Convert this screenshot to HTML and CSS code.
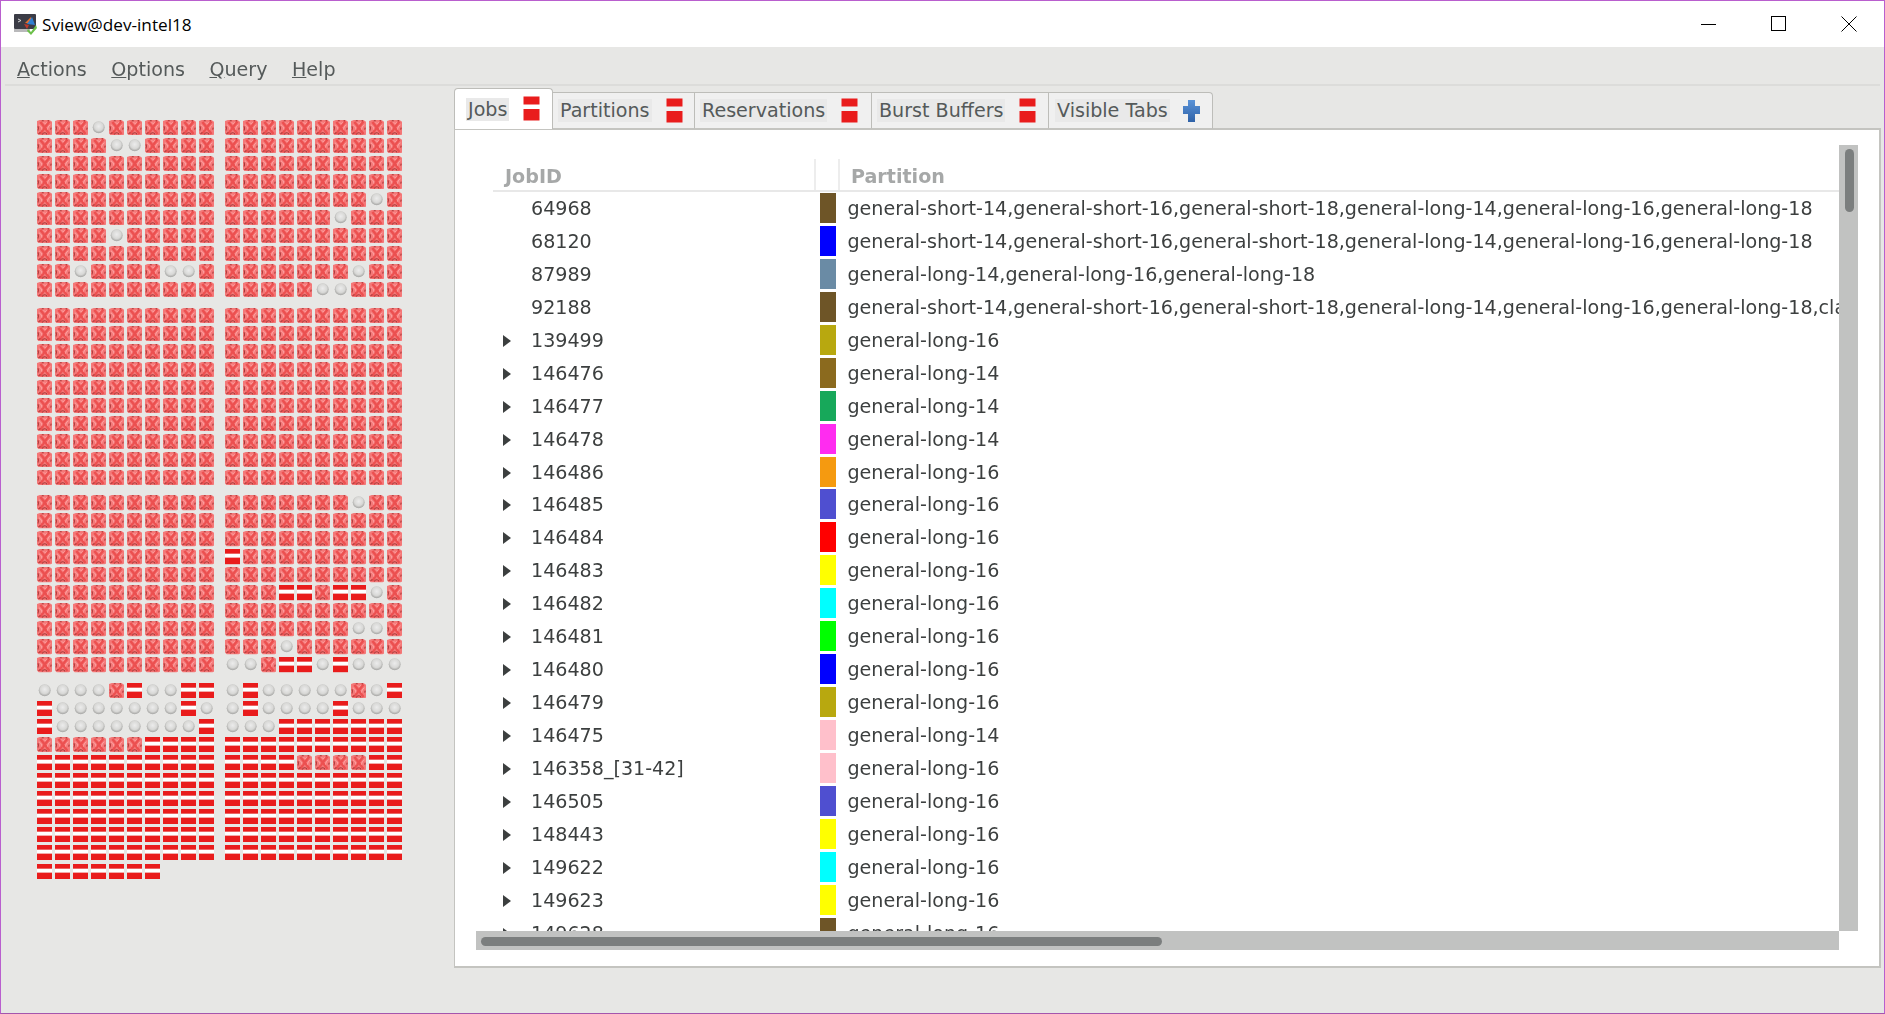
FILE: index.html
```html
<!DOCTYPE html>
<html lang="en">
<head>
<meta charset="utf-8">
<title>Sview@dev-intel18</title>
<link rel="stylesheet" href="styles.css">
</head>
<body>
<svg class="sprites" aria-hidden="true">
  <defs>
    <radialGradient id="ball" cx="50%" cy="42%" r="55%">
      <stop offset="0" stop-color="#ececec"/>
      <stop offset=".65" stop-color="#d8d8d6"/>
      <stop offset="1" stop-color="#a9a9a7"/>
    </radialGradient>
    <linearGradient id="crossfill" x1="0" y1="0" x2="0" y2="1">
      <stop offset="0" stop-color="#5a93d8"/>
      <stop offset="1" stop-color="#2f62a8"/>
    </linearGradient>
    <symbol id="err" viewBox="0 0 16 16" preserveAspectRatio="none">
      <path d="M0 1L3 0L13 0L16 2L16 15L14 16L2 16L0 14z" fill="#f47878"/>
      <path d="M3.500 2C6 5 9 9 13 14.500M13 1.500C10 5 7 9 3.500 14.500" fill="none" stroke="#ec5050" stroke-width="2.400"/>
      <path d="M2 5C4 6 5 8 5 10M14 5C12 6 11 8 11 10M7 2.500C8 4 9 4 10 2.500" fill="none" stroke="#ffa8a8" stroke-width="1"/>
      <path d="M5 .7L7 .7M11 .7L12.500 .7M1 6.500C1.800 8 1.800 9.500 1 11M5.500 15C6.500 12.800 9.500 12.800 10.500 15M1.500 14.500L3.500 13M14.800 8L14.200 10" fill="none" stroke="#a83636" stroke-width="1.100"/>
    </symbol>
    <symbol id="idle" viewBox="0 0 16 16" preserveAspectRatio="none">
      <circle cx="8" cy="7.600" r="6.200" fill="url(#ball)"/>
    </symbol>
    <symbol id="drain" viewBox="0 0 16 16" preserveAspectRatio="none">
      <rect width="16" height="5" fill="#e91c1c"/>
      <rect y="5" width="16" height="4" fill="#fff"/>
      <rect y="9" width="16" height="7" fill="#e91c1c"/>
    </symbol>
  </defs>
</svg>
<div class="window">
  <header class="titlebar">
    <svg class="appicon" viewBox="0 0 23 22">
      <rect x="0" y="1" width="22" height="15" rx="1" fill="#3b3c46"/>
      <rect x="0" y="16" width="16" height="3" fill="#b9b9bb"/>
      <path d="M4 6l3 1.500-3 1.500" fill="none" stroke="#d8d8d8"/>
      <path d="M11 10l6-6 1 7z" fill="#e8702a"/>
      <path d="M13 11l5-7 3 8z" fill="#2f7fd0"/>
      <path d="M10 11l5 1-2 4z" fill="#c0392b"/>
      <path d="M14 16l3 3 5-7 1 3-6 7-4-4z" fill="#6cc04a"/>
    </svg>
    <span class="title">Sview@dev-intel18</span>
    <div class="winctl">
      <svg class="wc" viewBox="0 0 16 16"><path d="M0 8.500h15" stroke="#000" fill="none"/></svg>
      <svg class="wc" viewBox="0 0 16 16"><rect x=".5" y=".5" width="14" height="14" stroke="#000" fill="none"/></svg>
      <svg class="wc" viewBox="0 0 16 16"><path d="M.5.5l15 15M15.500.5l-15 15" stroke="#000" fill="none"/></svg>
    </div>
  </header>
  <div class="app">
    <nav class="menubar">
      <span class="menu"><u>A</u>ctions</span>
      <span class="menu"><u>O</u>ptions</span>
      <span class="menu"><u>Q</u>uery</span>
      <span class="menu"><u>H</u>elp</span>
    </nav>
    <main class="main">
      <section class="nodes" id="nodes"></section>
      <section class="notebook">
        <div class="tabstrip">
          <div class="tab tab-active tab-jobs"><span class="tablabel">Jobs</span><svg class="tabicon" viewBox="0 0 17 25"><rect x=".5" y=".5" width="16" height="8" fill="#e91c1c"/><rect x=".5" y="13" width="16" height="11.500" fill="#e91c1c"/></svg></div>
          <div class="tab tab-part"><span class="tablabel">Partitions</span><svg class="tabicon" viewBox="0 0 17 25"><rect x=".5" y=".5" width="16" height="8" fill="#e91c1c"/><rect x=".5" y="13" width="16" height="11.500" fill="#e91c1c"/></svg></div>
          <div class="tab tab-res"><span class="tablabel">Reservations</span><svg class="tabicon" viewBox="0 0 17 25"><rect x=".5" y=".5" width="16" height="8" fill="#e91c1c"/><rect x=".5" y="13" width="16" height="11.500" fill="#e91c1c"/></svg></div>
          <div class="tab tab-bb"><span class="tablabel">Burst Buffers</span><svg class="tabicon" viewBox="0 0 17 25"><rect x=".5" y=".5" width="16" height="8" fill="#e91c1c"/><rect x=".5" y="13" width="16" height="11.500" fill="#e91c1c"/></svg></div>
          <div class="tab tab-vis"><span class="tablabel">Visible Tabs</span><svg class="tabicon" viewBox="0 0 17 22"><path d="M5 0h7v6h5v8h-5v8h-7v-8h-5v-8h5z" fill="url(#crossfill)"/></svg></div>
        </div>
        <div class="page">
          <div class="view">
            <div class="thead">
              <div class="th th-job">JobID</div>
              <div class="th th-color"></div>
              <div class="th th-part">Partition</div>
            </div>
            <div class="tr"><span class="arrow"></span><span class="id">64968</span><span class="sw c-brown"></span><span class="pt">general-short-14,general-short-16,general-short-18,general-long-14,general-long-16,general-long-18</span></div>
            <div class="tr"><span class="arrow"></span><span class="id">68120</span><span class="sw c-blue"></span><span class="pt">general-short-14,general-short-16,general-short-18,general-long-14,general-long-16,general-long-18</span></div>
            <div class="tr"><span class="arrow"></span><span class="id">87989</span><span class="sw c-steel"></span><span class="pt">general-long-14,general-long-16,general-long-18</span></div>
            <div class="tr"><span class="arrow"></span><span class="id">92188</span><span class="sw c-brown"></span><span class="pt">general-short-14,general-short-16,general-short-18,general-long-14,general-long-16,general-long-18,classres-16</span></div>
            <div class="tr"><span class="arrow closed"></span><span class="id">139499</span><span class="sw c-olive"></span><span class="pt">general-long-16</span></div>
            <div class="tr"><span class="arrow closed"></span><span class="id">146476</span><span class="sw c-tan"></span><span class="pt">general-long-14</span></div>
            <div class="tr"><span class="arrow closed"></span><span class="id">146477</span><span class="sw c-green"></span><span class="pt">general-long-14</span></div>
            <div class="tr"><span class="arrow closed"></span><span class="id">146478</span><span class="sw c-magenta"></span><span class="pt">general-long-14</span></div>
            <div class="tr"><span class="arrow closed"></span><span class="id">146486</span><span class="sw c-orange"></span><span class="pt">general-long-16</span></div>
            <div class="tr"><span class="arrow closed"></span><span class="id">146485</span><span class="sw c-indigo"></span><span class="pt">general-long-16</span></div>
            <div class="tr"><span class="arrow closed"></span><span class="id">146484</span><span class="sw c-red"></span><span class="pt">general-long-16</span></div>
            <div class="tr"><span class="arrow closed"></span><span class="id">146483</span><span class="sw c-yellow"></span><span class="pt">general-long-16</span></div>
            <div class="tr"><span class="arrow closed"></span><span class="id">146482</span><span class="sw c-cyan"></span><span class="pt">general-long-16</span></div>
            <div class="tr"><span class="arrow closed"></span><span class="id">146481</span><span class="sw c-lime"></span><span class="pt">general-long-16</span></div>
            <div class="tr"><span class="arrow closed"></span><span class="id">146480</span><span class="sw c-blue"></span><span class="pt">general-long-16</span></div>
            <div class="tr"><span class="arrow closed"></span><span class="id">146479</span><span class="sw c-olive"></span><span class="pt">general-long-16</span></div>
            <div class="tr"><span class="arrow closed"></span><span class="id">146475</span><span class="sw c-pink"></span><span class="pt">general-long-14</span></div>
            <div class="tr"><span class="arrow closed"></span><span class="id">146358_[31-42]</span><span class="sw c-pink"></span><span class="pt">general-long-16</span></div>
            <div class="tr"><span class="arrow closed"></span><span class="id">146505</span><span class="sw c-indigo"></span><span class="pt">general-long-16</span></div>
            <div class="tr"><span class="arrow closed"></span><span class="id">148443</span><span class="sw c-yellow"></span><span class="pt">general-long-16</span></div>
            <div class="tr"><span class="arrow closed"></span><span class="id">149622</span><span class="sw c-cyan"></span><span class="pt">general-long-16</span></div>
            <div class="tr"><span class="arrow closed"></span><span class="id">149623</span><span class="sw c-yellow"></span><span class="pt">general-long-16</span></div>
            <div class="tr"><span class="arrow closed"></span><span class="id">149628</span><span class="sw c-brown"></span><span class="pt">general-long-16</span></div>
          </div>
          <div class="vbar"><div class="vthumb"></div></div>
          <div class="hbar"><div class="hthumb"></div></div>
        </div>
      </section>
    </main>
  </div>
</div>
<script src="nodes.js"></script>
</body>
</html>
```
FILE: styles.css
```css
* { box-sizing: border-box; }
html, body { margin: 0; height: 100%; overflow: hidden; }
.sprites { width: 0; height: 0; display: block; position: absolute; }

.window {
  width: 1885px;
  height: 1014px;
  display: flex;
  flex-direction: column;
  border: 1px solid #b95fce;
  border-bottom-color: #a455ad;
  background: #e7e7e5;
}

.titlebar {
  height: 46px;
  flex: none;
  background: #fff;
  display: flex;
  align-items: center;
  padding-left: 13px;
  font-family: "Open Sans", "Noto Sans", sans-serif;
  font-size: 17.2px;
  color: #000;
}
.appicon { width: 23px; height: 22px; margin-right: 5px; }
.winctl { margin-left: auto; display: flex; gap: 55px; padding-right: 27px; align-items: center; }
.wc { width: 16px; height: 16px; display: block; }
.wc:nth-child(1) { margin-right: -1px; }
.wc:nth-child(2) { margin-right: -1px; }

.app {
  flex: 1;
  display: flex;
  flex-direction: column;
  min-height: 0;
  font-family: "DejaVu Sans", sans-serif;
  font-size: 19.1px;
  filter: blur(.45px);
}

.menubar {
  height: 39px;
  flex: none;
  margin-left: 4px;
  margin-right: 4px;
  border-bottom: 2px solid #dcdcda;
  display: flex;
  align-items: flex-end;
  gap: 24.500px;
  padding: 0 0 0 12px;
  color: #555a5a;
  line-height: 29px;
}

.main { flex: 1; min-height: 0; display: flex; padding-bottom: 45px; }

.nodes { width: 453px; flex: none; padding: 34px 0 0 36px; }
.block { margin-bottom: 7.700px; }
.nrow { display: flex; gap: 8px; height: 18px; }
.nrow-last { margin-top: 1px; }
.half { display: flex; width: 180px; }
.n { width: 15.400px; height: 15.400px; margin-right: 2.600px; display: block; flex: none; }

.notebook { flex: 1; min-width: 0; margin-right: 3px; display: flex; flex-direction: column; padding-top: 3px; }

.tabstrip { display: flex; align-items: flex-end; height: 40px; flex: none; position: relative; z-index: 1; margin-bottom: -1px; }
.tab {
  height: 37px;
  background: #f0f0f0;
  border: 1px solid #bdbdb9;
  border-bottom-color: #c4c4c0;
  border-left: 0;
  display: flex;
  align-items: center;
  color: #555a5a;
}
.tab-vis { border-radius: 0 4px 0 0; }
.tab-active {
  height: 41px;
  background: #fff;
  border-left: 1px solid #bdbdb9;
  border-bottom: 0;
  border-radius: 4px 4px 0 0;
  align-items: flex-start;
  padding-top: 7px;
}
.tablabel { background: #e9e9e9; padding: 0 2px; line-height: 23px; }
.tab-active .tablabel { margin-top: 2px; }
.tabicon { width: 17px; height: 25px; display: block; flex: none; margin-left: auto; }
.tab-jobs { width: 99px; padding: 7px 12px 0 11px; }
.tab-part { width: 142px; padding: 0 11px 0 5px; }
.tab-res { width: 177px; padding: 0 13px 0 5px; }
.tab-bb { width: 177px; padding: 0 12px 0 5px; }
.tab-vis { width: 164px; padding: 0 12px 0 6px; }
.tab-vis .tabicon { height: 22px; }

.page {
  flex: 1;
  min-height: 0;
  background: #fff;
  border: 1px solid #c4c4c0;
  border-width: 2px 2px 2px 1px;
  display: grid;
  grid-template-columns: 1363px 19px;
  grid-template-rows: 786px 19px;
  padding: 15px 0 0 21px;
}

.view { overflow: hidden; padding: 14px 0 0 17px; }
.thead { display: flex; height: 33px; border-bottom: 2px solid #e8e8e8; color: #a6a8a8; font-weight: bold; }
.th { height: 31px; line-height: 35px; }
.th-job { width: 323px; padding-left: 12px; border-right: 2px solid #ededed; }
.th-color { width: 24px; border-right: 2px solid #ededed; }
.th-part { padding-left: 11px; white-space: nowrap; }

.tr { display: flex; height: 32.950px; line-height: 33px; color: #3c3f3f; white-space: nowrap; }
.arrow { width: 38px; flex: none; }
.arrow.closed::before {
  content: "";
  display: block;
  margin: 11px 0 0 10px;
  width: 0;
  height: 0;
  border-left: 8px solid #3c3f3f;
  border-top: 6.500px solid transparent;
  border-bottom: 6.500px solid transparent;
}
.id { width: 289px; flex: none; }
.sw { width: 16px; height: 30px; margin-top: 1px; flex: none; }
.pt { margin-left: 11.500px; }

.c-brown { background: #6e5527; }
.c-blue { background: #0000ff; }
.c-steel { background: #6a8ba5; }
.c-olive { background: #b8a80f; }
.c-tan { background: #8b6a1e; }
.c-green { background: #17a85a; }
.c-magenta { background: #ff2cf0; }
.c-orange { background: #f59a10; }
.c-indigo { background: #4f4fd0; }
.c-red { background: #ff0000; }
.c-yellow { background: #ffff00; }
.c-cyan { background: #00ffff; }
.c-lime { background: #00ff00; }
.c-pink { background: #ffc0cb; }

.vbar { background: #c1c2c1; padding: 4px 4px 0 6px; }
.vthumb { height: 63px; background: #7b7e7e; border-radius: 5px; }
.hbar { background: #c1c2c1; padding: 6px 0 4px 5px; }
.hthumb { width: 681px; height: 9px; background: #7b7e7e; border-radius: 5px; }
```
FILE: nodes.js
```js
var rows = [
  ["XXXOXXXXXX", "XXXXXXXXXX"], ["XXXXOOXXXX", "XXXXXXXXXX"], ["XXXXXXXXXX", "XXXXXXXXXX"], ["XXXXXXXXXX", "XXXXXXXXXX"], ["XXXXXXXXXX", "XXXXXXXXOX"],
  ["XXXXXXXXXX", "XXXXXXOXXX"], ["XXXXOXXXXX", "XXXXXXXXXX"], ["XXXXXXXXXX", "XXXXXXXXXX"], ["XXOXXXXOOX", "XXXXXXXOXX"], ["XXXXXXXXXX", "XXXXXOOXXX"],
  ["XXXXXXXXXX", "XXXXXXXXXX"], ["XXXXXXXXXX", "XXXXXXXXXX"], ["XXXXXXXXXX", "XXXXXXXXXX"], ["XXXXXXXXXX", "XXXXXXXXXX"], ["XXXXXXXXXX", "XXXXXXXXXX"],
  ["XXXXXXXXXX", "XXXXXXXXXX"], ["XXXXXXXXXX", "XXXXXXXXXX"], ["XXXXXXXXXX", "XXXXXXXXXX"], ["XXXXXXXXXX", "XXXXXXXXXX"], ["XXXXXXXXXX", "XXXXXXXXXX"],
  ["XXXXXXXXXX", "XXXXXXXOXX"], ["XXXXXXXXXX", "XXXXXXXXXX"], ["XXXXXXXXXX", "XXXXXXXXXX"], ["XXXXXXXXXX", "DXXXXXXXXX"], ["XXXXXXXXXX", "XXXXXXXXXX"],
  ["XXXXXXXXXX", "XXXDDXDDOX"], ["XXXXXXXXXX", "XXXXXXXXXX"], ["XXXXXXXXXX", "XXXXXXXOOX"], ["XXXXXXXXXX", "XXXOXXXXXX"], ["XXXXXXXXXX", "OOXDDODOOO"],
  ["OOOOXDOODD", "ODOOOOOXOD"], ["DOOOOOOODO", "ODOOOODOOO"], ["DOOOOOOOOD", "OOODDDDDDD"], ["XXXXXXDDDD", "DDDDDDDDDD"], ["DDDDDDDDDD", "DDDDXXXXDD"],
  ["DDDDDDDDDD", "DDDDDDDDDD"], ["DDDDDDDDDD", "DDDDDDDDDD"], ["DDDDDDDDDD", "DDDDDDDDDD"], ["DDDDDDDDDD", "DDDDDDDDDD"], ["DDDDDDDDDD", "DDDDDDDDDD"],
  ["DDDDDDD", ""]
];
var symbols = { X: "err", O: "idle", D: "drain" };
var html = "";
rows.forEach(function (row, i) {
  if (i % 10 === 0 && i < 40) {
    html += (i ? "</div>" : "") + '<div class="block">';
  }
  html += '<div class="nrow' + (i === 40 ? " nrow-last" : "") + '">';
  row.forEach(function (half) {
    html += '<div class="half">';
    half.split("").forEach(function (c) {
      html += '<svg class="n"><use href="#' + symbols[c] + '"/></svg>';
    });
    html += "</div>";
  });
  html += "</div>";
});
document.getElementById("nodes").innerHTML = html + "</div>";
```
